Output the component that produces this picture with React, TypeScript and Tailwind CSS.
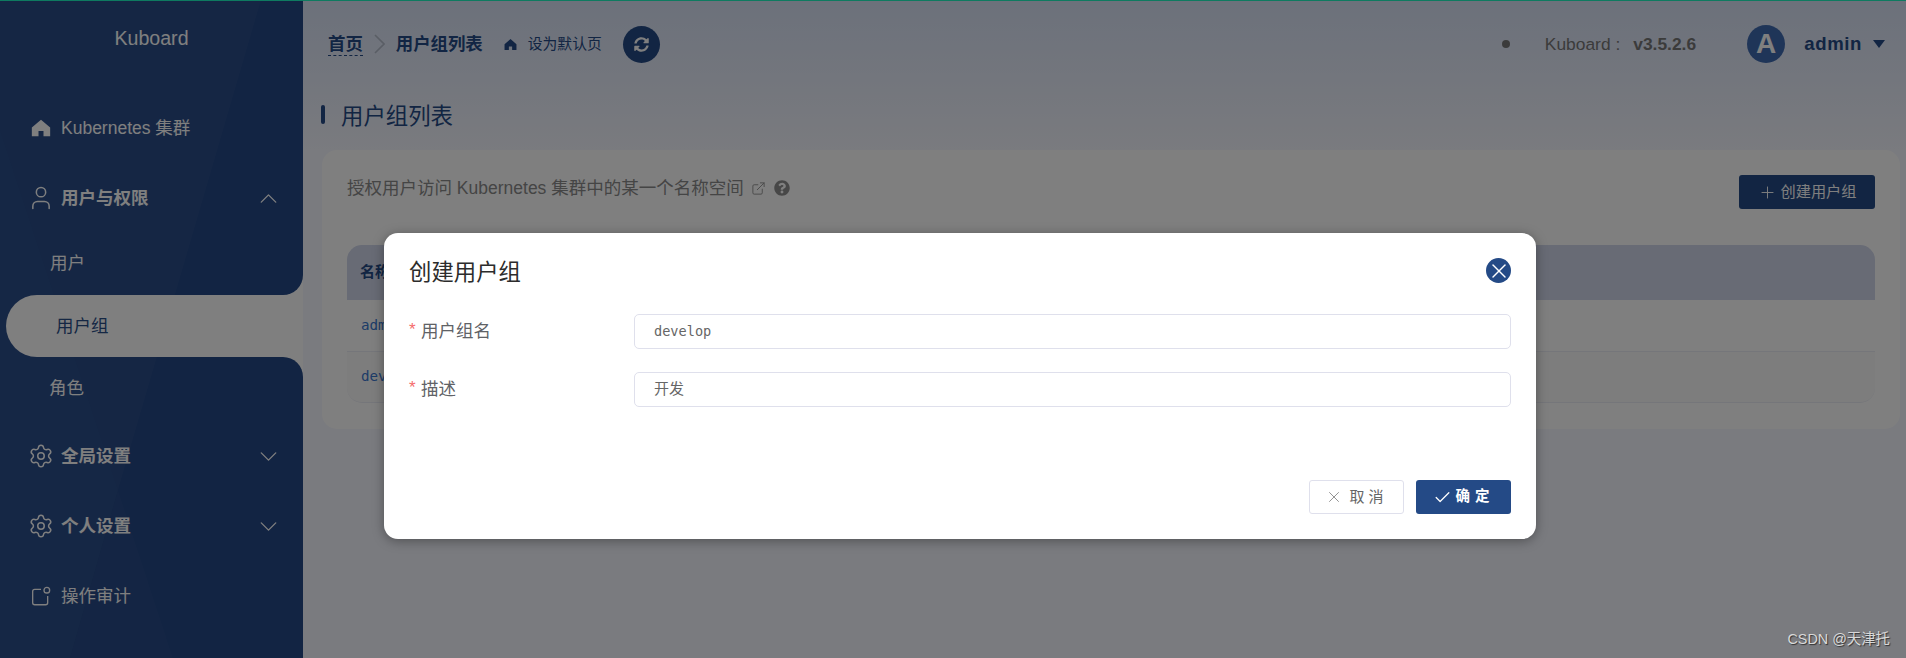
import { Check, ChevronDown, ChevronUp, ExternalLink, Plus, Settings, User, X } from "lucide-react"
import { FaQuestionCircle, FaSyncAlt } from "react-icons/fa"

function HomeIcon({ className }: { className: string }) {
  return (
    <svg viewBox="0 0 24 24" fill="currentColor" className={className}>
      <path d="M12 2 L1 11.5 L1 22 L9 22 L9 15.5 L15 15.5 L15 22 L23 22 L23 11.5 Z" />
    </svg>
  )
}

function AuditIcon({ className }: { className: string }) {
  return (
    <svg viewBox="0 0 24 24" fill="none" stroke="currentColor" strokeWidth="1.6" className={className}>
      <path d="M12 4 H4.5 Q2 4 2 6.5 V20 Q2 22.5 4.5 22.5 H17.5 Q20 22.5 20 20 V12" />
      <circle cx="19" cy="5" r="3.4" />
    </svg>
  )
}

function NavRow({
  icon,
  label,
  bold,
  chevron,
}: {
  icon: React.ReactNode
  label: string
  bold?: boolean
  chevron?: "up" | "down"
}) {
  return (
    <div className="h-[70px] flex items-center pl-[30px] pr-[20px] text-white">
      <span className="w-[21px] flex justify-center shrink-0">{icon}</span>
      <span className={`ml-[10px] flex-1 ${bold ? "font-bold" : ""}`}>{label}</span>
      {chevron === "up" && <ChevronUp className="w-[29px] h-[29px]" strokeWidth={1.1} />}
      {chevron === "down" && <ChevronDown className="w-[29px] h-[29px]" strokeWidth={1.1} />}
    </div>
  )
}

function Sidebar() {
  return (
    <aside className="relative w-[303px] shrink-0 h-full bg-white flex flex-col text-[17.5px]">
      <div className="bg-[#244886] rounded-br-[20px] h-[295px] shrink-0">
        <div className="h-[93px] pt-[24px] text-center text-white text-[19.6px] leading-[28px]">Kuboard</div>
        <NavRow icon={<HomeIcon className="w-[20px] h-[20px] shrink-0" />} label="Kubernetes 集群" />
        <NavRow icon={<User className="w-[28px] h-[28px] shrink-0" strokeWidth={1.3} />} label="用户与权限" bold chevron="up" />
        <div className="h-[62px] pb-[2px] flex items-center pl-[50px] text-white">用户</div>
      </div>

      <div className="bg-[#244886] h-[62px] pl-[6px] shrink-0">
        <div className="h-full bg-white rounded-l-[31px] pl-[50px] flex items-center text-[#244a86]">用户组</div>
      </div>

      <div className="bg-[#244886] rounded-tr-[20px] flex-1">
        <div className="h-[62px] mb-[2px] flex items-center pl-[49px] text-white">角色</div>
        <NavRow icon={<Settings className="w-[26px] h-[26px] shrink-0" strokeWidth={1.4} />} label="全局设置" bold chevron="down" />
        <NavRow icon={<Settings className="w-[26px] h-[26px] shrink-0" strokeWidth={1.4} />} label="个人设置" bold chevron="down" />
        <NavRow icon={<AuditIcon className="w-[20px] h-[20px] shrink-0" />} label="操作审计" />
      </div>

      <svg viewBox="0 0 303 658" className="absolute inset-0 w-[303px] h-[658px] pointer-events-none">
        <polygon points="0,0 261,0 118,490 0,130" fill="#ffffff" fillOpacity="0.03" />
        <polygon points="0,130 118,490 70,658 0,658" fill="#ffffff" fillOpacity="0.035" />
        <polygon points="118,490 173,658 70,658" fill="#ffffff" fillOpacity="0.02" />
      </svg>
    </aside>
  )
}

function Header() {
  return (
    <header className="h-[88px] flex items-center pl-[25px] pr-[21px] text-[17.4px] text-[#244a86]">
      <span className="font-bold border-b border-dashed border-[#244a86] leading-[22px]">首页</span>
      <svg viewBox="0 0 11 20" fill="none" stroke="#b4bccb" strokeWidth="1.6" className="w-[11px] h-[20px] ml-[11px] mr-[11px]">
        <polyline points="1,1 10,10 1,19" />
      </svg>
      <span className="font-bold">用户组列表</span>
      <HomeIcon className="w-[13px] h-[13px] ml-[21px]" />
      <span className="ml-[11px] text-[14.8px]">设为默认页</span>
      <span className="ml-[21px] w-[37px] h-[37px] rounded-full bg-[#244a86] text-white flex items-center justify-center">
        <FaSyncAlt className="w-[15px] h-[15px]" />
      </span>

      <span className="ml-auto w-[8px] h-[8px] rounded-full bg-[#777777]" />
      <span className="ml-[35px] text-[#777777]">Kuboard :</span>
      <span className="ml-[13px] w-[114px] font-bold text-[#777777]">v3.5.2.6</span>
      <span className="w-[38px] h-[38px] rounded-full bg-[#3f6ab0] text-white font-bold text-[28px] flex items-center justify-center">
        A
      </span>
      <span className="ml-[19px] font-bold text-[18.6px] tracking-[0.6px]">admin</span>
      <svg viewBox="0 0 12 8" className="w-[12px] h-[8px] ml-[11px]" fill="currentColor">
        <polygon points="0,0 12,0 6,8" />
      </svg>
    </header>
  )
}

function GroupTable() {
  return (
    <div className="text-[14.2px] font-['DejaVu_Sans_Mono','Noto_Sans_CJK_SC',monospace] text-[#3b78d0]">
      <div className="h-[55px] rounded-t-[15px] bg-[#d0d6ea] pl-[13px] flex items-center text-[15px] font-bold text-[#244a86] font-['Liberation_Sans','Noto_Sans_CJK_SC',sans-serif]">
        名称
      </div>
      <div className="h-[51px] pl-[14px] flex items-center">admin</div>
      <div className="h-[52px] pl-[14px] flex items-center bg-[#fbfbfb] border-y border-[#ebedf5] rounded-b-[15px]">develop</div>
    </div>
  )
}

function Content() {
  return (
    <div className="pl-[18px] pr-[6px]">
      <div className="h-[62px] flex items-start">
        <span className="mt-[17px] w-[4px] h-[19px] rounded-full bg-[#244a86]" />
        <h1 className="ml-[16px] mt-[12px] text-[22.4px] leading-[34px] text-[#244a86]">用户组列表</h1>
      </div>
      <section className="ml-px bg-white rounded-[15px] pt-[25px] px-[25px] pb-[26px] h-[279px]">
        <div className="h-[34px] flex items-center text-[17.5px] text-[#8a8a8a] mb-[36px]">
          <div className="flex items-center mb-[8px]">
            <span className="leading-[26px]">授权用户访问 Kubernetes 集群中的某一个名称空间</span>
            <ExternalLink className="w-[15px] h-[15px] ml-[7px] text-[#999999]" strokeWidth={1.6} />
            <FaQuestionCircle className="w-[16px] h-[16px] ml-[8px] text-[#8f8f8f]" />
          </div>
          <button className="ml-auto w-[136px] h-[34px] rounded-[3px] bg-[#244a86] text-white text-[15.2px] flex items-center justify-center gap-[4px]">
            <Plus className="w-[19px] h-[19px]" strokeWidth={1.2} />
            创建用户组
          </button>
        </div>
        <GroupTable />
      </section>
    </div>
  )
}

function FormRow({ label, children }: { label: string; children: React.ReactNode }) {
  return (
    <div className="flex items-center h-[35px]">
      <label className="w-[225px] shrink-0 text-[17.5px] text-[#606266] flex items-center">
        <span className="text-[#f56c6c] text-[17px] leading-[20px] w-[12px] -mt-[3px]">*</span>
        <span className="leading-[26px] -mt-[1px]">{label}</span>
      </label>
      <div className="flex-1 h-full border border-[#dfe0ec] rounded-[5px] pl-[19px] flex items-center text-[#666666]">
        {children}
      </div>
    </div>
  )
}

function Dialog() {
  return (
    <div className="absolute left-[384px] top-[233px] w-[1152px] h-[306px] bg-white rounded-[14px] shadow-[0_2px_12px_rgba(0,0,0,0.35)] px-[25px] pt-[25px] pb-[25px] flex flex-col">
      <div className="flex items-center justify-between h-[25px] mb-[31px]">
        <h2 className="text-[22.4px] leading-[30px] text-[#2c2c2c] mt-[5px]">创建用户组</h2>
        <button className="w-[25px] h-[25px] rounded-full bg-[#244a86] text-white flex items-center justify-center">
          <X className="w-[24px] h-[24px] shrink-0" strokeWidth={1.4} />
        </button>
      </div>
      <div className="flex flex-col gap-[23px]">
        <FormRow label="用户组名">
          <span className="text-[13.6px] font-['DejaVu_Sans_Mono',monospace]">develop</span>
        </FormRow>
        <FormRow label="描述">
          <span className="text-[15px]">开发</span>
        </FormRow>
      </div>
      <div className="mt-auto flex justify-end gap-[12px]">
        <button className="w-[95px] h-[34px] rounded-[3px] border border-[#dfe0ec] bg-white text-[#666666] text-[15px] tracking-[4px] flex items-center justify-center gap-[6px]">
          <X className="w-[18px] h-[18px] text-[#888888]" strokeWidth={1.2} />
          <span>取消</span>
        </button>
        <button className="w-[95px] h-[34px] rounded-[3px] bg-[#244a86] text-white font-bold text-[14.5px] tracking-[5px] flex items-center justify-center gap-[4px]">
          <Check className="w-[19px] h-[19px]" strokeWidth={1.6} />
          <span>确定</span>
        </button>
      </div>
    </div>
  )
}

export default function App() {
  return (
    <div className="relative w-[1906px] h-[658px] overflow-hidden flex font-['Liberation_Sans','Noto_Sans_CJK_SC',sans-serif]">
      <Sidebar />
      <main className="flex-1 h-full bg-[linear-gradient(#d8e2f6,#f4f6fe_150px)]">
        <Header />
        <Content />
      </main>

      <div className="absolute inset-0 bg-black/50" />
      <div className="absolute top-0 inset-x-0 h-px bg-[#0e7a60]" />
      <Dialog />
      <div className="absolute right-[16px] bottom-[9px] text-[14.4px] leading-[20px] text-[#d9d9d9] [text-shadow:1px_1px_1px_rgba(0,0,0,0.6)]">
        CSDN @天津托
      </div>
    </div>
  )
}
